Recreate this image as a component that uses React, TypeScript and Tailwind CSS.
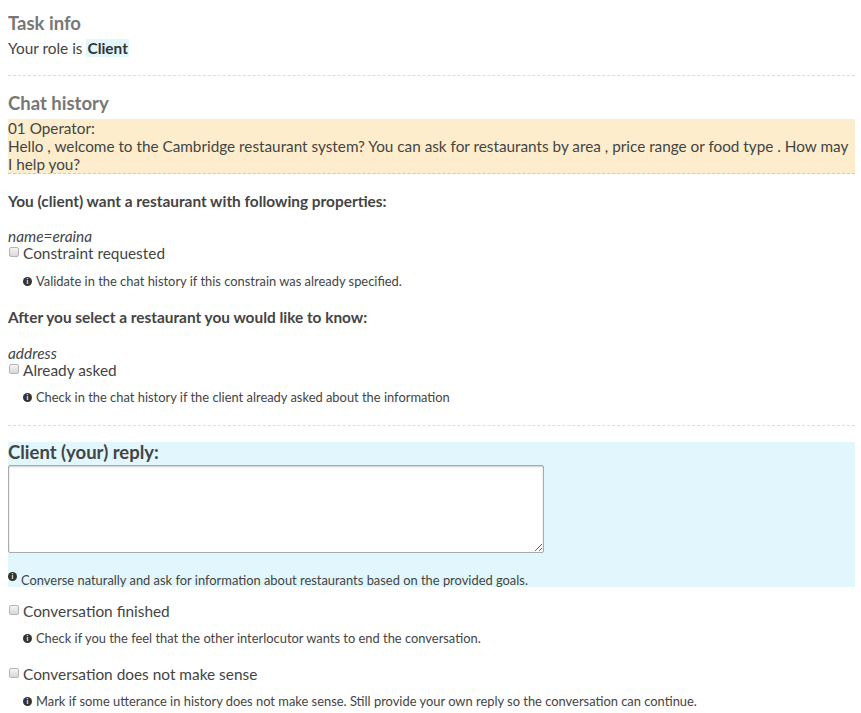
import React from 'react';

const Info: React.FC<{ raised?: boolean }> = ({ raised }) => (
  <span
    className={`inline-flex items-center justify-center w-[9px] h-[9px] rounded-full bg-[#333] text-white text-[7px] font-bold leading-none mr-[4px] ${raised ? 'relative -top-[5px]' : 'relative -top-[1px]'}`}
  >
    i
  </span>
);

const Check: React.FC<{ label: string }> = ({ label }) => (
  <label className="flex items-center h-[18px] text-[15.4px] text-[#444]">
    <span className="inline-block w-[10px] h-[10px] ml-[1px] mr-[4px] -mt-[5px] rounded-[2px] border border-[#b5b5b5] bg-gradient-to-b from-[#f4f4f4] to-[#d8d8d8]" />
    <span>{label}</span>
  </label>
);

const Hint: React.FC<{ text: string; className?: string }> = ({ text, className }) => (
  <div className={`pl-[15px] h-[18px] flex items-center text-[12.9px] text-[#444] ${className ?? ''}`}>
    <Info />
    <span>{text}</span>
  </div>
);

const App: React.FC = () => {
  return (
    <div className="pl-2 pr-[6px] pt-[12px] pb-2 bg-white min-h-screen text-[#444]" style={{ fontFamily: 'Lato, "Open Sans", sans-serif' }}>
      <h3 className="text-[18.5px] leading-[22px] font-bold text-[#777]">Task info</h3>
      <div className="mt-[4px] text-[15.4px] leading-[20px]">
        Your role is <span className="font-bold bg-[#e1f7fd] px-[1px] text-[#333]">Client</span>
      </div>

      <div className="mt-[17px] border-t border-dashed border-[#ddd]" />

      <h3 className="mt-[16px] text-[18.5px] leading-[22px] font-bold text-[#777]">Chat history</h3>
      <div className="mt-[5px] bg-[#fdedcc] text-[15.3px] leading-[18px] border-b border-dashed border-[#ccc]">
        <div>01 Operator:</div>
        <div>
          Hello , welcome to the Cambridge restaurant system? You can ask for restaurants by area , price range or food type . How may I help you?
        </div>
      </div>

      <div className="mt-[17px] text-[15.4px] leading-[20px] font-bold text-[#444]">
        You (client) want a restaurant with following properties:
      </div>
      <div className="mt-[16px] text-[15.4px] leading-[18px] italic">name=eraina</div>
      <Check label="Constraint requested" />
      <Hint className="mt-[10px]" text="Validate in the chat history if this constrain was already specified." />

      <div className="mt-[16px] text-[15.4px] leading-[20px] font-bold text-[#444]">
        After you select a restaurant you would like to know:
      </div>
      <div className="mt-[17px] text-[15.4px] leading-[18px] italic">address</div>
      <Check label="Already asked" />
      <Hint className="mt-[9px]" text="Check in the chat history if the client already asked about the information" />

      <div className="mt-[18px] border-t border-dashed border-[#ddd]" />

      <div className="mt-[16px] bg-[#e1f7fd] h-[145px]">
        <h3 className="text-[18.5px] leading-[20px] font-bold text-[#444]">Client (your) reply:</h3>
        <textarea className="mt-[3px] block w-[536px] h-[88px] bg-white border border-[#aaa] rounded-[2px] shadow-[inset_0_1px_2px_rgba(0,0,0,0.2)]" />
        <div className="mt-[20px] flex items-center h-[16px] text-[12.9px]">
          <Info raised />
          <span>Converse naturally and ask for information about restaurants based on the provided goals.</span>
        </div>
      </div>

      <div className="mt-[16px]">
        <Check label="Conversation finished" />
      </div>
      <Hint className="mt-[9px]" text="Check if you the feel that the other interlocutor wants to end the conversation." />

      <div className="mt-[18px]">
        <Check label="Conversation does not make sense" />
      </div>
      <Hint className="mt-[9px]" text="Mark if some utterance in history does not make sense. Still provide your own reply so the conversation can continue." />
    </div>
  );
};

export default App;
